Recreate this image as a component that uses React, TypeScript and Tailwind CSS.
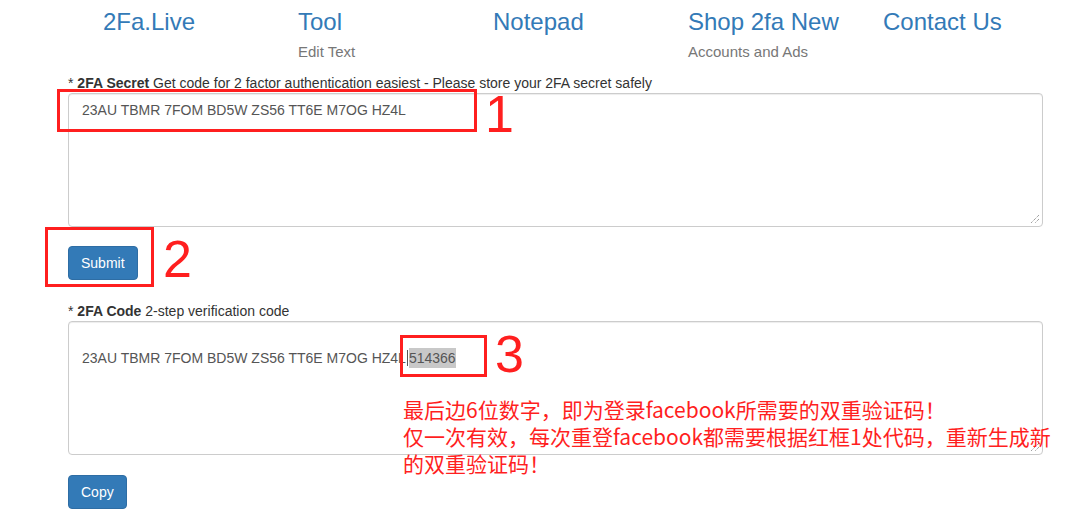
import React from "react";

const Grip = () => (
  <svg width="10" height="10" viewBox="0 0 10 10" className="absolute right-[2px] bottom-[2px]">
    <line x1="9" y1="1" x2="1" y2="9" stroke="#777" strokeWidth="1" strokeDasharray="1 1" />
    <line x1="9" y1="5" x2="5" y2="9" stroke="#777" strokeWidth="1" strokeDasharray="1 1" />
  </svg>
);

export default function App() {
  const font = { fontFamily: '"Liberation Sans", Arial, sans-serif' };
  return (
    <div className="relative w-[1069px] h-[518px] overflow-hidden bg-white text-[#333]" style={font}>
      {/* Nav */}
      <div className="flex pl-[103px] pt-[9px]">
        <div className="w-[195px] shrink-0">
          <div className="text-[24px] leading-[26px] text-[#337ab7]">2Fa.Live</div>
        </div>
        <div className="w-[195px] shrink-0">
          <div className="text-[24px] leading-[26px] text-[#337ab7]">Tool</div>
          <div className="mt-[7px] text-[15px] leading-[20px] text-[#777]">Edit Text</div>
        </div>
        <div className="w-[195px] shrink-0">
          <div className="text-[24px] leading-[26px] text-[#337ab7]">Notepad</div>
        </div>
        <div className="w-[195px] shrink-0">
          <div className="text-[24px] leading-[26px] text-[#337ab7]">Shop 2fa New</div>
          <div className="mt-[7px] text-[15px] leading-[20px] text-[#777]">Accounts and Ads</div>
        </div>
        <div className="w-[195px] shrink-0">
          <div className="text-[24px] leading-[26px] text-[#337ab7]">Contact Us</div>
        </div>
      </div>

      {/* Form */}
      <div className="flex flex-col pl-[68px] pr-[26px] pt-[11px]">
        <div className="text-[14px] leading-[20px]">
          * <b>2FA Secret</b> Get code for 2 factor authentication easiest - Please store your 2FA secret safely
        </div>
        <div className="relative h-[134px] rounded-[4px] border border-[#ccc] shadow-[inset_0_1px_1px_rgba(0,0,0,0.075)] px-[13px] py-[6px] text-[14px] leading-[20px] text-[#555]">
          23AU TBMR 7FOM BD5W ZS56 TT6E M7OG HZ4L
          <Grip />
        </div>
        <div className="mt-[19px]">
          <button className="h-[34px] px-[12px] rounded-[4px] bg-[#337ab7] border border-[#2e6da4] text-white text-[14px] leading-[20px]">
            Submit
          </button>
        </div>
        <div className="mt-[21px] text-[14px] leading-[20px]">
          * <b>2FA Code</b> 2-step verification code
        </div>
        <div className="relative h-[134px] rounded-[4px] border border-[#ccc] shadow-[inset_0_1px_1px_rgba(0,0,0,0.075)] px-[13px] py-[6px] text-[14px] leading-[20px] text-[#555]">
          <div className="h-[20px]" />
          <div className="flex items-center whitespace-nowrap">
            <span>23AU TBMR 7FOM BD5W ZS56 TT6E M7OG HZ4L</span>
            <span className="inline-block w-[1px] h-[16px] bg-[#555] mx-[1px]" />
            <span className="bg-[#c8c8c8]">514366</span>
          </div>
          <Grip />
        </div>
        <div className="mt-[20px]">
          <button className="h-[34px] px-[12px] rounded-[4px] bg-[#337ab7] border border-[#2e6da4] text-white text-[14px] leading-[20px]">
            Copy
          </button>
        </div>
      </div>

      {/* Annotations */}
      <div className="absolute left-[57px] top-[89px] w-[420px] h-[43px] border-[3px] border-[#ff1f1f]" />
      <div className="absolute left-[485px] top-[86px] text-[52px] leading-[56px] text-[#ff1f1f]">1</div>
      <div className="absolute left-[45px] top-[227px] w-[109px] h-[60px] border-[3px] border-[#ff1f1f]" />
      <div className="absolute left-[163px] top-[231px] text-[52px] leading-[56px] text-[#ff1f1f]">2</div>
      <div className="absolute left-[400px] top-[335px] w-[87px] h-[42px] border-[3px] border-[#ff1f1f]" />
      <div className="absolute left-[495px] top-[326px] text-[52px] leading-[56px] text-[#ff1f1f]">3</div>
      <div
        className="absolute left-[403px] top-[396px] text-[21px] leading-[27px] text-[#ff1f1f] whitespace-nowrap"
        style={{ fontFamily: '"Noto Sans CJK SC", "Noto Sans", sans-serif' }}
      >
        <div>最后边6位数字，即为登录facebook所需要的双重验证码！</div>
        <div>仅一次有效，每次重登facebook都需要根据红框1处代码，重新生成新</div>
        <div>的双重验证码！</div>
      </div>
    </div>
  );
}
